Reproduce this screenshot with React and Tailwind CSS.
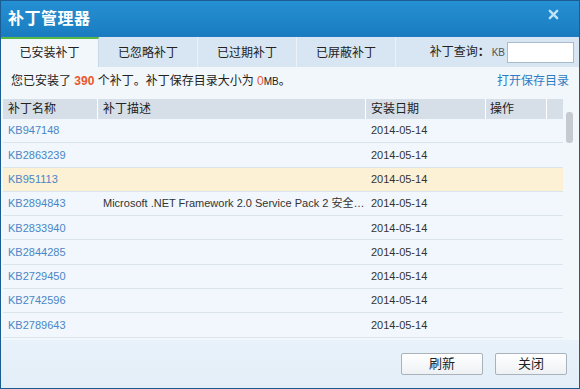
import React from 'react';

const rows = [
  { id: 'KB947148', desc: '', date: '2014-05-14' },
  { id: 'KB2863239', desc: '', date: '2014-05-14' },
  { id: 'KB951113', desc: '', date: '2014-05-14', hot: true },
  { id: 'KB2894843', desc: 'Microsoft .NET Framework 2.0 Service Pack 2 安全…', date: '2014-05-14' },
  { id: 'KB2833940', desc: '', date: '2014-05-14' },
  { id: 'KB2844285', desc: '', date: '2014-05-14' },
  { id: 'KB2729450', desc: '', date: '2014-05-14' },
  { id: 'KB2742596', desc: '', date: '2014-05-14' },
  { id: 'KB2789643', desc: '', date: '2014-05-14' },
];

const tabs = ['已安装补丁', '已忽略补丁', '已过期补丁', '已屏蔽补丁'];

export default function App() {
  return (
    <div
      className="w-[580px] h-[389px] flex flex-col border border-[#1b5d92] bg-[#eaf2f9] text-[12px] text-[#222] overflow-hidden"
      style={{ fontFamily: '"Liberation Sans", "Noto Sans CJK SC", sans-serif' }}
    >
      {/* Title bar */}
      <div className="h-[35px] flex items-center justify-between pl-[7px] pr-[20px] bg-gradient-to-b from-[#2590d3] to-[#1a7cc0]">
        <span className="text-white text-[16px] font-bold tracking-[0.5px]">补丁管理器</span>
        <svg width="11" height="11" viewBox="0 0 12 12" className="mb-[9px]">
          <path d="M2 2 L10 10 M10 2 L2 10" stroke="#bfe3fb" strokeWidth="2.6" strokeLinecap="round" />
        </svg>
      </div>

      {/* Tabs */}
      <div className="h-[31px] flex items-stretch bg-[#d8e6f3] border-t border-[#1e7cbf]">
        {tabs.map((t, i) => (
          <div
            key={t}
            className={
              i === 0
                ? 'w-[98px] flex items-center justify-center bg-[#f2f7fb] border-t-2 border-[#58b845] border-r border-r-[#c9d8e6] pb-[1px]'
                : 'w-[99px] flex items-center justify-center border-r border-[#eaf2f9] pt-[2px]'
            }
          >
            {t}
          </div>
        ))}
        <div className="flex-1 flex items-center justify-end pr-[5px] gap-[2px]">
          <span>补丁查询<b>：</b></span>
          <span className="text-[10px] text-[#555]">KB</span>
          <input className="w-[67px] h-[21px] bg-white border border-[#a9bccd] outline-none" />
        </div>
      </div>

      {/* Info row */}
      <div className="h-[28px] flex items-center justify-between pl-[10px] pr-[10px] bg-[#f2f7fb]">
        <span>
          您已安装了 <span className="text-[#e8582e] font-bold">390</span> 个补丁。补丁保存目录大小为{' '}
          <span className="text-[#e8582e]">0</span>
          <span className="text-[10px]">MB</span>。
        </span>
        <span className="text-[#2c7dc4] text-[12px]">打开保存目录</span>
      </div>

      {/* Table */}
      <div className="flex-1 flex bg-[#f2f7fb] pl-[2px] pr-[4px] pt-[4px]">
        <div className="flex-1 flex flex-col">
          <div className="h-[20px] flex items-stretch bg-[#d6dee7] text-[12px]">
            <div className="w-[95px] pl-[5px] flex items-center border-r border-white">补丁名称</div>
            <div className="w-[268px] pl-[5px] flex items-center border-r border-white">补丁描述</div>
            <div className="w-[120px] pl-[5px] flex items-center border-r border-white">安装日期</div>
            <div className="w-[61px] pl-[4px] flex items-center border-r border-white">操作</div>
            <div className="flex-1" />
          </div>
          {rows.map((r) => (
            <div
              key={r.id}
              className={`h-[24.3px] flex items-center border-b border-[#dbe5ee] text-[11px] ${r.hot ? 'bg-[#fcf1d5]' : 'bg-[#f1f7fc]'}`}
            >
              <div className="w-[95px] pl-[5px] text-[#4a86c6]">{r.id}</div>
              <div className="w-[268px] pl-[5px] text-[#333] whitespace-nowrap overflow-hidden">{r.desc}</div>
              <div className="w-[120px] pl-[5px] text-[#333]">{r.date}</div>
            </div>
          ))}
        </div>
        <div className="w-[12px] flex justify-center pt-[13px]">
          <div className="w-[7px] h-[31px] rounded-[3px] bg-[#c4cacf]" />
        </div>
      </div>

      {/* Footer */}
      <div className="h-[48px] flex items-center justify-end gap-[12px] pr-[12px] bg-gradient-to-b from-[#e9f2fa] to-[#e3eef8] pb-[1px]">
        <button className="w-[82px] h-[22px] bg-gradient-to-b from-white to-[#eef1f4] border border-[#aab3bc] rounded-[2px] text-[13px]">
          刷新
        </button>
        <button className="w-[72px] h-[22px] bg-gradient-to-b from-white to-[#eef1f4] border border-[#aab3bc] rounded-[2px] text-[13px]">
          关闭
        </button>
      </div>
    </div>
  );
}
